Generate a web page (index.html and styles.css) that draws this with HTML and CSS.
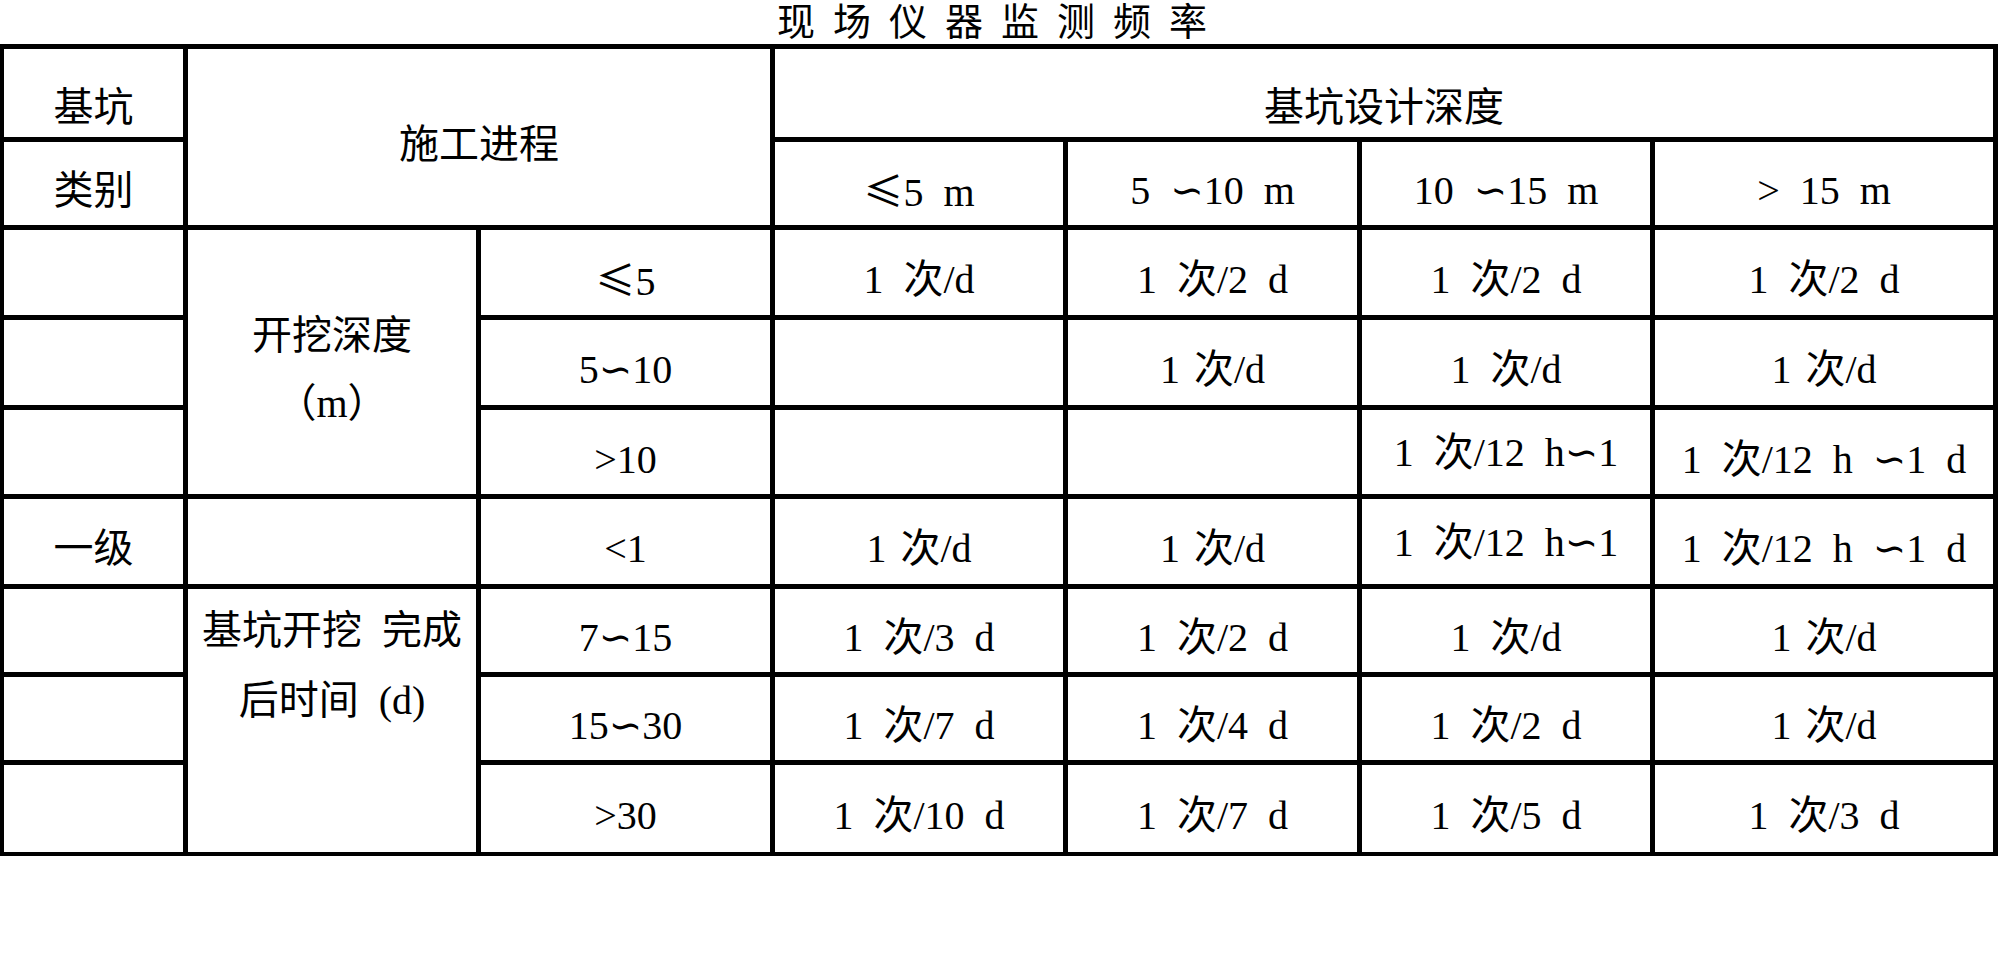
FILE: index.html
```html
<!DOCTYPE html>
<html lang="zh-CN">
<head>
<meta charset="utf-8">
<title>现场仪器监测频率</title>
<link rel="stylesheet" href="styles.css">
</head>
<body>
<div class="page">
  <div class="title">现 场 仪 器 监 测 频 率</div>
  <div class="grid">
    <div class="c r1">基坑</div>
    <div class="c span-proc">施工进程</div>
    <div class="c r1 span-depth">基坑设计深度</div>

    <div class="c">类别</div>
    <div class="c"><span class="t"><span class="fw">≤</span>5 m</span></div>
    <div class="c">5 ∽10 m</div>
    <div class="c">10 ∽15 m</div>
    <div class="c">&gt; 15 m</div>

    <div class="c"></div>
    <div class="c stack span-dig"><span>开挖深度</span><span>（m）</span></div>
    <div class="c"><span class="t"><span class="fw">≤</span>5</span></div>
    <div class="c">1 次/d</div>
    <div class="c">1 次/2 d</div>
    <div class="c">1 次/2 d</div>
    <div class="c">1 次/2 d</div>

    <div class="c"></div>
    <div class="c">5∽10</div>
    <div class="c"></div>
    <div class="c tight">1 次/d</div>
    <div class="c">1 次/d</div>
    <div class="c tight">1 次/d</div>

    <div class="c"></div>
    <div class="c">&gt;10</div>
    <div class="c"></div>
    <div class="c"></div>
    <div class="c hi">1 次/12 h∽1</div>
    <div class="c">1 次/12 h ∽1 d</div>

    <div class="c">一级</div>
    <div class="c"></div>
    <div class="c">&lt;1</div>
    <div class="c tight">1 次/d</div>
    <div class="c tight">1 次/d</div>
    <div class="c hi">1 次/12 h∽1</div>
    <div class="c">1 次/12 h ∽1 d</div>

    <div class="c"></div>
    <div class="c stack span-time"><span>基坑开挖 完成</span><span>后时间 (d)</span></div>
    <div class="c">7∽15</div>
    <div class="c">1 次/3 d</div>
    <div class="c">1 次/2 d</div>
    <div class="c">1 次/d</div>
    <div class="c tight">1 次/d</div>

    <div class="c"></div>
    <div class="c">15∽30</div>
    <div class="c">1 次/7 d</div>
    <div class="c">1 次/4 d</div>
    <div class="c">1 次/2 d</div>
    <div class="c tight">1 次/d</div>

    <div class="c"></div>
    <div class="c">&gt;30</div>
    <div class="c">1 次/10 d</div>
    <div class="c">1 次/7 d</div>
    <div class="c">1 次/5 d</div>
    <div class="c">1 次/3 d</div>
  </div>
</div>
</body>
</html>
```

FILE: styles.css
```css
html, body {
  margin: 0;
  padding: 0;
  background: #fff;
}

.page {
  font-family: "Liberation Serif", "DejaVu Sans", "Noto Sans CJK SC", serif;
  color: #000;
}

.title {
  height: 44px;
  line-height: 44px;
  font-size: 38px;
  text-align: center;
  padding-right: 16px;
  word-spacing: 8.5px;
  white-space: pre;
}

.grid {
  display: grid;
  width: max-content;
  grid-template-columns: 179px 288px 289px 288px 289px 288px 338px;
  grid-template-rows: 88px 83px 85px 85px 84px 85px 83px 83px 87px;
  gap: 5px;
  padding: 5px 5px 4px 4px;
  background: #000;
}

.c {
  background: #fff;
  display: flex;
  align-items: center;
  justify-content: center;
  text-align: center;
  font-size: 40px;
  line-height: 46px;
  padding-top: 15px;
  box-sizing: border-box;
  word-spacing: 10px;
  white-space: pre;
  overflow: hidden;
}

.r1 {
  padding-top: 30px;
}

.hi {
  padding-top: 2px;
}

.tight {
  word-spacing: 4px;
}

.stack {
  flex-direction: column;
}

.span-proc {
  grid-column: 2 / span 2;
  grid-row: 1 / span 2;
  padding-top: 16px;
}

.span-depth {
  grid-column: 4 / span 4;
  grid-row: 1;
}

.span-dig {
  grid-column: 2;
  grid-row: 3 / span 3;
  line-height: 68px;
  padding-top: 16px;
}

.span-time {
  grid-column: 2;
  grid-row: 7 / span 3;
  line-height: 70px;
  justify-content: flex-start;
  padding-top: 7px;
}

.fw {
  display: inline-block;
  width: 1em;
  text-align: center;
  font-family: "Noto Sans CJK SC", sans-serif;
}
```
